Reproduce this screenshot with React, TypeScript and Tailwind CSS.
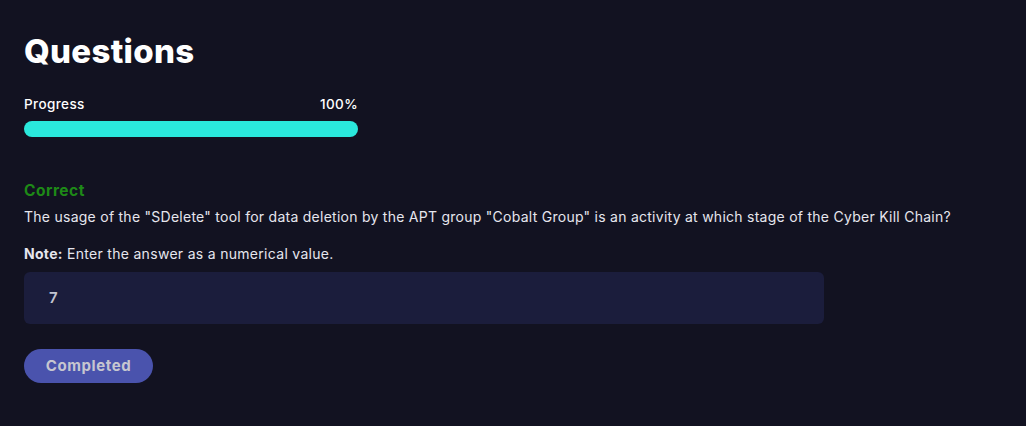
import React from "react";

export default function App() {
  return (
    <div className="min-h-screen w-full bg-[#121221] text-white" style={{ fontFamily: "Inter, 'Noto Sans', sans-serif" }}>
      <div className="px-6 pt-[30px]">
        <h1 className="text-[33px] font-extrabold leading-[42px] tracking-[0.3px]">Questions</h1>
        <div className="mt-[24px] w-[334px]">
          <div className="flex justify-between text-[13.5px] font-medium leading-[16px] tracking-[0.4px]">
            <span>Progress</span>
            <span>100%</span>
          </div>
          <div className="mt-[9px] h-4 w-full rounded-full bg-[#2ae8dc]" />
        </div>
        <div className="mt-[44px] text-[15.5px] font-bold leading-[20px] tracking-[0.5px] text-[#1e8a17]">Correct</div>
        <p className="mt-[6px] text-[14px] leading-[20px] tracking-[0.26px] text-[#e6e6ee]">
          The usage of the "SDelete" tool for data deletion by the APT group "Cobalt Group" is an activity at which stage of the Cyber Kill Chain?
        </p>
        <p className="mt-[17px] text-[14px] leading-[20px] tracking-[0.3px] text-[#e6e6ee]">
          <span className="font-bold">Note:</span> Enter the answer as a numerical value.
        </p>
        <div className="mt-[8px] flex h-[52px] w-[800px] items-center rounded-md bg-[#1b1d3c] px-[25px] text-[15px] font-semibold text-[#c2c4d0]">
          7
        </div>
        <button className="mt-[25px] flex h-[34px] w-[129px] items-center justify-center rounded-full bg-[#4a53ad] text-[15px] font-bold tracking-[0.6px] text-[#c6c6d0]">
          Completed
        </button>
      </div>
    </div>
  );
}
